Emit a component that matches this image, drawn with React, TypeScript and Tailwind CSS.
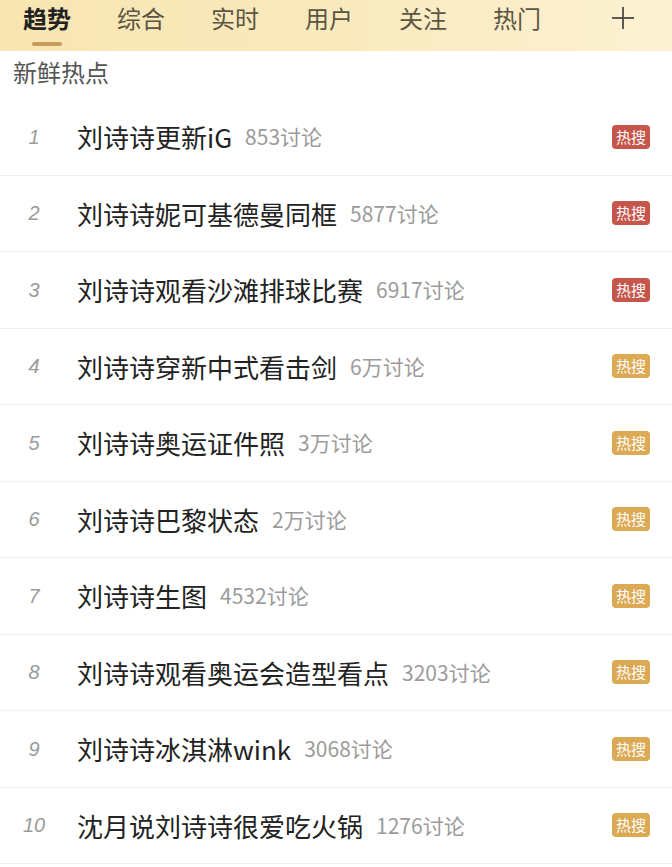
const tabs = ["趋势", "综合", "实时", "用户", "关注", "热门"];

const items = [
  { title: "刘诗诗更新iG", count: "853讨论", hot: "red" },
  { title: "刘诗诗妮可基德曼同框", count: "5877讨论", hot: "red" },
  { title: "刘诗诗观看沙滩排球比赛", count: "6917讨论", hot: "red" },
  { title: "刘诗诗穿新中式看击剑", count: "6万讨论", hot: "gold" },
  { title: "刘诗诗奥运证件照", count: "3万讨论", hot: "gold" },
  { title: "刘诗诗巴黎状态", count: "2万讨论", hot: "gold" },
  { title: "刘诗诗生图", count: "4532讨论", hot: "gold" },
  { title: "刘诗诗观看奥运会造型看点", count: "3203讨论", hot: "gold" },
  { title: "刘诗诗冰淇淋wink", count: "3068讨论", hot: "gold" },
  { title: "沈月说刘诗诗很爱吃火锅", count: "1276讨论", hot: "gold" },
];

function Tabs() {
  return (
    <div className="flex h-[51px] bg-gradient-to-r from-[#f8e6b2] via-[#f9eabd] to-[#fcf1d2] pl-[23px] pr-[38px]">
      <div className="flex gap-[46px]">
        {tabs.map((t, i) => (
          <div key={t} className="flex flex-col items-center">
            <span
              className={
                i === 0
                  ? "text-[24px] leading-[36px] font-bold text-[#222]"
                  : "text-[24px] leading-[36px] text-[#5c5444]"
              }
            >
              {t}
            </span>
            {i === 0 && <div className="mt-[6px] h-[4px] w-[30px] rounded-full bg-[#c79c5c]" />}
          </div>
        ))}
      </div>
      {/* add tab */}
      <div className="ml-auto flex h-[36px] items-center">
        <svg width="22" height="22" viewBox="0 0 22 22" stroke="#4a4a4a" strokeWidth="1.8">
          <line x1="11" y1="0" x2="11" y2="22" />
          <line x1="0" y1="11" x2="22" y2="11" />
        </svg>
      </div>
    </div>
  );
}

function Row({ n, title, count, hot }: { n: number; title: string; count: string; hot: string }) {
  return (
    <div className="flex h-[76.5px] items-center border-b border-[#f0f0f0]">
      <span className="w-[68px] text-center text-[20px] italic text-[#9a9a9a] font-['Liberation_Sans',sans-serif]">
        {n}
      </span>
      <span className="ml-[9px] text-[26px] text-[#222]">{title}</span>
      <span className="ml-[13px] text-[21px] text-[#9b9b9b]">{count}</span>
      <span
        className={
          hot === "red"
            ? "ml-auto mr-[22px] flex h-[24px] w-[38px] items-center justify-center rounded-[4px] bg-[#c6554b] text-[15px] text-white"
            : "ml-auto mr-[22px] flex h-[24px] w-[38px] items-center justify-center rounded-[4px] bg-[#dca955] text-[15px] text-white"
        }
      >
        热搜
      </span>
    </div>
  );
}

export default function App() {
  return (
    <div className="h-[867px] w-[672px] overflow-hidden bg-white font-['Noto_Sans_CJK_SC','Noto_Sans',sans-serif]">
      <Tabs />

      {/* section title */}
      <div className="h-[48px] pl-[13px] text-[24px] leading-[42px] text-[#555]">新鲜热点</div>

      <div>
        {items.map((it, i) => (
          <Row key={i} n={i + 1} {...it} />
        ))}
      </div>
    </div>
  );
}
